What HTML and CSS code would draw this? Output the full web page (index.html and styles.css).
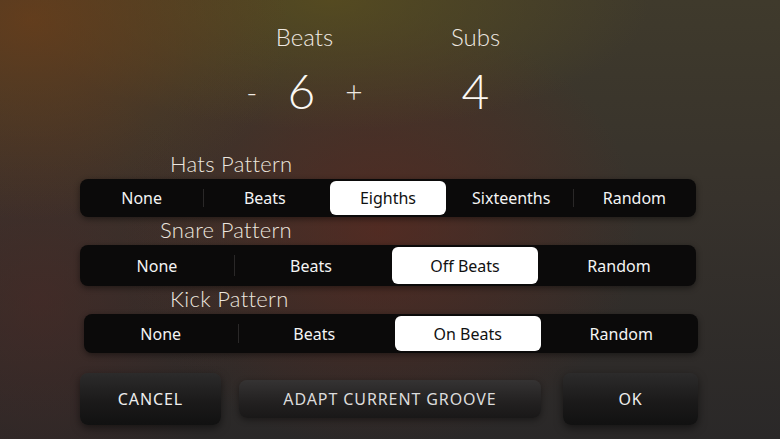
FILE: index.html
```html
<!DOCTYPE html>
<html lang="en">
<head>
  <meta charset="UTF-8">
  <meta name="viewport" content="width=device-width, initial-scale=1.0">
  <title>Groove Settings</title>
  <link rel="stylesheet" href="styles.css">
</head>
<body>
  <div class="screen">
    <div class="steppers">
      <div class="stepper">
        <div class="stepper-title">Beats</div>
        <div class="stepper-row">
          <span class="step-btn">-</span>
          <span class="step-value">6</span>
          <span class="step-btn">+</span>
        </div>
      </div>
      <div class="stepper">
        <div class="stepper-title">Subs</div>
        <div class="stepper-row">
          <span class="step-value">4</span>
        </div>
      </div>
    </div>

    <div class="pattern hats">
      <div class="pattern-label">Hats Pattern</div>
      <div class="segmented five">
        <div class="seg">None</div>
        <div class="seg sep">Beats</div>
        <div class="seg active">Eighths</div>
        <div class="seg">Sixteenths</div>
        <div class="seg sep">Random</div>
      </div>
    </div>

    <div class="pattern snare">
      <div class="pattern-label">Snare Pattern</div>
      <div class="segmented four">
        <div class="seg">None</div>
        <div class="seg sep">Beats</div>
        <div class="seg active">Off Beats</div>
        <div class="seg">Random</div>
      </div>
    </div>

    <div class="pattern kick">
      <div class="pattern-label">Kick Pattern</div>
      <div class="segmented four">
        <div class="seg">None</div>
        <div class="seg sep">Beats</div>
        <div class="seg active">On Beats</div>
        <div class="seg">Random</div>
      </div>
    </div>

    <div class="actions">
      <button class="btn btn-cancel">CANCEL</button>
      <button class="btn btn-adapt">ADAPT CURRENT GROOVE</button>
      <button class="btn btn-ok">OK</button>
    </div>
  </div>
</body>
</html>
```

FILE: styles.css
```css
* {
  box-sizing: border-box;
}

html, body {
  margin: 0;
  height: 100%;
}

body {
  font-family: "Noto Sans", Arial, sans-serif;
  color: #fff;
  overflow: hidden;
  background-color: #2e2b29;
  background-image:
    radial-gradient(ellipse 260px 200px at 30px 20px, rgba(110, 62, 24, 0.75), rgba(110, 62, 24, 0)),
    radial-gradient(ellipse 320px 130px at 330px 0px, rgba(90, 78, 30, 0.8), rgba(90, 78, 30, 0)),
    radial-gradient(ellipse 260px 220px at 380px 230px, rgba(96, 40, 30, 0.65), rgba(96, 40, 30, 0)),
    radial-gradient(ellipse 200px 220px at 40px 300px, rgba(80, 40, 36, 0.5), rgba(80, 40, 36, 0)),
    linear-gradient(180deg, #3f3a2c 0%, #37322c 45%, #2a2828 100%);
}

.screen {
  width: 780px;
  height: 439px;
  padding-top: 22px;
}

.steppers {
  display: flex;
  justify-content: center;
  gap: 21px;
}

.stepper {
  width: 150px;
  display: flex;
  flex-direction: column;
  align-items: center;
  font-family: "Lato", sans-serif;
  font-weight: 300;
  color: #efe9e2;
}

.stepper-title {
  font-size: 24px;
  line-height: 30px;
}

.stepper-row {
  display: flex;
  align-items: center;
  gap: 30px;
  height: 56px;
  margin-top: 11px;
}

.step-value {
  font-size: 48px;
  line-height: 56px;
  font-weight: 300;
  color: #fbf8f4;
}

.step-btn {
  font-size: 30px;
  line-height: 56px;
}

.pattern-label {
  font-family: "Lato", sans-serif;
  font-weight: 300;
  font-size: 22px;
  line-height: 26px;
  color: #ece6df;
  letter-spacing: 0.3px;
}

.pattern {
  padding: 0 84px 0 80px;
}

.hats {
  margin-top: 32px;
}

.hats .pattern-label {
  padding-left: 90px;
}

.snare {
  margin-top: 0;
}

.snare .pattern-label {
  padding-left: 80px;
}

.kick {
  margin-top: 0;
  padding: 0 82px 0 84px;
}

.kick .pattern-label {
  padding-left: 86px;
}

.segmented {
  display: flex;
  height: 38px;
  padding: 2px 0;
  margin-top: 2px;
  background-color: #0b0a0a;
  border-radius: 8px;
  box-shadow: 0 2px 6px rgba(0, 0, 0, 0.45);
}

.snare .segmented {
  height: 41px;
}

.kick .segmented {
  height: 39px;
}

.seg {
  flex: 1;
  display: flex;
  align-items: center;
  justify-content: center;
  font-size: 16px;
  color: #f4f4f4;
  position: relative;
  margin: 0 4px;
  border-radius: 6px;
}

.seg.sep::before {
  content: "";
  position: absolute;
  left: -4px;
  top: 8px;
  bottom: 8px;
  width: 1px;
  background-color: #2a2828;
}

.seg.active {
  background-color: #fff;
  color: #111;
}

.actions {
  display: flex;
  align-items: center;
  padding: 0 82px 0 80px;
  margin-top: 20px;
}

.btn {
  font-family: "Noto Sans", Arial, sans-serif;
  font-size: 16px;
  letter-spacing: 0.9px;
  color: #eee;
  border: none;
  border-radius: 8px;
  background: linear-gradient(180deg, #2c2b2b 0%, #1b1a1a 55%, #111 100%);
  box-shadow: 0 3px 8px rgba(0, 0, 0, 0.5);
  cursor: pointer;
}

.btn-cancel {
  width: 141px;
  height: 52px;
}

.btn-adapt {
  width: 302px;
  height: 38px;
  margin-left: 18px;
  color: #dcdcdc;
  background: linear-gradient(180deg, #353333 0%, #222020 60%, #191818 100%);
  box-shadow: 0 2px 6px rgba(0, 0, 0, 0.4);
}

.btn-ok {
  width: 135px;
  height: 52px;
  margin-left: auto;
}
```
